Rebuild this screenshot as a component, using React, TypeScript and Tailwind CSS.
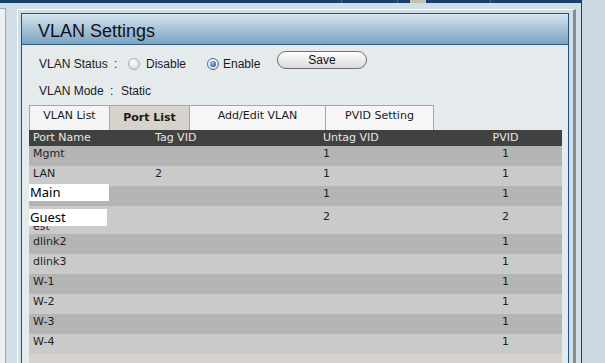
import React from "react";

const rows: { name: string; tag: string; untag: string; pvid: string; tall?: boolean }[] = [
  { name: "Mgmt", tag: "", untag: "1", pvid: "1" },
  { name: "LAN", tag: "2", untag: "1", pvid: "1" },
  { name: "", tag: "", untag: "1", pvid: "1" },
  { name: "est", tag: "", untag: "2", pvid: "2", tall: true },
  { name: "dlink2", tag: "", untag: "", pvid: "1" },
  { name: "dlink3", tag: "", untag: "", pvid: "1" },
  { name: "W-1", tag: "", untag: "", pvid: "1" },
  { name: "W-2", tag: "", untag: "", pvid: "1" },
  { name: "W-3", tag: "", untag: "", pvid: "1" },
  { name: "W-4", tag: "", untag: "", pvid: "1" },
];

function Radio({ checked }: { checked?: boolean }) {
  return (
    <svg width="12" height="12" viewBox="0 0 12 12" className="shrink-0">
      <defs>
        <radialGradient id={checked ? "rgOn" : "rgOff"} cx="40%" cy="35%" r="70%">
          <stop offset="0%" stopColor="#ffffff" />
          <stop offset="100%" stopColor={checked ? "#d9dde2" : "#d4d6d8"} />
        </radialGradient>
        <radialGradient id="dot" cx="40%" cy="35%" r="70%">
          <stop offset="0%" stopColor="#9cc8f0" />
          <stop offset="100%" stopColor="#1f5f9e" />
        </radialGradient>
      </defs>
      <circle
        cx="6"
        cy="6"
        r="5.5"
        fill={`url(#${checked ? "rgOn" : "rgOff"})`}
        stroke={checked ? "#4a6b8a" : "#a9adb1"}
        strokeWidth="1"
      />
      {checked && <circle cx="6" cy="6" r="3" fill="url(#dot)" />}
    </svg>
  );
}

export default function App() {
  const dv = { fontFamily: '"DejaVu Sans", Verdana, sans-serif' };
  const ls = { fontFamily: '"Liberation Sans", Arial, sans-serif' };
  return (
    <div className="w-[605px] h-[363px] overflow-hidden bg-[#cad9e3] flex">
      <div className="w-[582px] h-[363px] shrink-0 border-r border-[#163f68] bg-[#d0dee8] flex flex-col overflow-hidden">
        {/* top strip */}
        <div className="h-[3px] shrink-0 w-full bg-[#17406a] flex">
          <div className="w-[341px]" />
          <div className="w-[1px] bg-[#4d7296]" />
          <div className="w-[55px]" />
          <div className="w-[1px] bg-[#4d7296]" />
          <div className="w-[12px]" />
          <div className="w-[16px] bg-[#c9bfae]" />
          <div className="w-[64px]" />
          <div className="w-[1px] bg-[#4d7296]" />
        </div>
        <div className="flex items-start shrink-0">
          {/* left sidebar sliver */}
          <div className="mt-[5px] w-[6px] h-[400px] bg-[#eef0f6] border-t border-r border-[#9ea8b2]" />
          {/* outer panel */}
          <div className="ml-[11px] mt-[6px] w-[559px] h-[400px] border-l border-t border-white border-r-[3px] border-r-[#8c8c8c] pt-[3px] pl-[3px] pr-[4px]">
            {/* inner panel */}
            <div className="h-full border border-[#23527c] bg-[#e5eaed] flex flex-col">
              <div
                className="h-[31px] shrink-0 border-b border-[#2e5f86] bg-gradient-to-b from-[#d6e5ef] to-[#7aa2c0] pl-[16px] pt-[7px] text-[18px] leading-[20px] text-[#111]"
                style={ls}
              >
                VLAN Settings
              </div>
              <div className="pl-[7px] pr-[6px] flex flex-col">
                {/* VLAN status row */}
                <div className="ml-[10px] mt-[6px] flex items-start text-[12px] leading-[16px] text-[#1a1a1a]" style={ls}>
                  <div className="mt-[5px] w-[75px]">VLAN Status</div>
                  <div className="mt-[5px] w-[14px]">:</div>
                  <div className="w-[79px] flex items-start">
                    <div className="mt-[7px]">
                      <Radio />
                    </div>
                    <span className="mt-[5px] ml-[6px]">Disable</span>
                  </div>
                  <div className="w-[70px] flex items-start">
                    <div className="mt-[7px]">
                      <Radio checked />
                    </div>
                    <span className="mt-[5px] ml-[4px]">Enable</span>
                  </div>
                  <button className="w-[90px] h-[18px] rounded-[9px] border border-[#707070] bg-gradient-to-b from-white to-[#dadada] text-[12px] leading-[16px] text-[#111] text-center">
                    Save
                  </button>
                </div>
                {/* VLAN mode row */}
                <div className="ml-[10px] mt-[11px] flex text-[12px] leading-[16px] text-[#1a1a1a]" style={ls}>
                  <div className="w-[71px]">VLAN Mode</div>
                  <div className="w-[11px]">:</div>
                  <div>Static</div>
                </div>
                {/* tabs */}
                <div className="mt-[6px] flex h-[25px] text-[11px] leading-[14px] text-[#1a1a1a]" style={dv}>
                  <div className="w-[80px] border-t border-l border-[#a5a5a5] bg-[#f4f4f4] text-center pt-[3px]">VLAN List</div>
                  <div className="w-[80px] border-t border-l border-[#a5a5a5] bg-[#d6d2cc] text-center pt-[5px] font-bold">Port List</div>
                  <div className="w-[136px] border-t border-l border-[#a5a5a5] bg-[#f6f6f6] text-center pt-[3px]">Add/Edit VLAN</div>
                  <div className="w-[109px] border-t border-l border-r border-[#a5a5a5] bg-[#f6f6f6] text-center pt-[3px]">PVID Setting</div>
                </div>
                {/* table */}
                <div className="relative bg-[#d6d2cc] h-[260px] text-[11px] leading-[14px]" style={dv}>
                  <div className="flex h-[16px] bg-[#414141] text-[#e8e8e8] pt-[1px]">
                    <div className="w-[122px] pl-[4px]">Port Name</div>
                    <div className="w-[168px] pl-[4px]">Tag VID</div>
                    <div className="w-[130px] pl-[4px]">Untag VID</div>
                    <div className="w-[113px] text-center">PVID</div>
                  </div>
                  {rows.map((r, i) => (
                    <div
                      key={i}
                      className={`flex text-[#1e1e1e] ${r.tall ? "h-[28px]" : "h-[20px] pt-[1px]"} ${i % 2 === 0 ? "bg-[#b4b4b4]" : "bg-[#cacaca]"}`}
                    >
                      <div className={`w-[122px] pl-[4px] ${r.tall ? "pt-[15px] leading-[12px]" : ""}`}>{r.name}</div>
                      <div className="w-[168px] pl-[4px]">{r.tag}</div>
                      <div className={`w-[130px] pl-[4px] ${r.tall ? "pt-[4px]" : ""}`}>{r.untag}</div>
                      <div className={`w-[113px] text-center ${r.tall ? "pt-[4px]" : ""}`}>{r.pvid}</div>
                    </div>
                  ))}
                  {/* white label overlays */}
                  <div
                    className="absolute left-0 top-[54px] w-[80px] h-[17px] bg-white pl-[1px] text-[13px] leading-[17px] text-black"
                    style={{ fontFamily: '"Noto Sans", sans-serif' }}
                  >
                    Main
                  </div>
                  <div
                    className="absolute left-0 top-[79px] w-[78px] h-[17px] bg-white pl-[1px] text-[13px] leading-[17px] text-black"
                    style={{ fontFamily: '"Noto Sans", sans-serif' }}
                  >
                    Guest
                  </div>
                </div>
              </div>
            </div>
          </div>
        </div>
      </div>
    </div>
  );
}
